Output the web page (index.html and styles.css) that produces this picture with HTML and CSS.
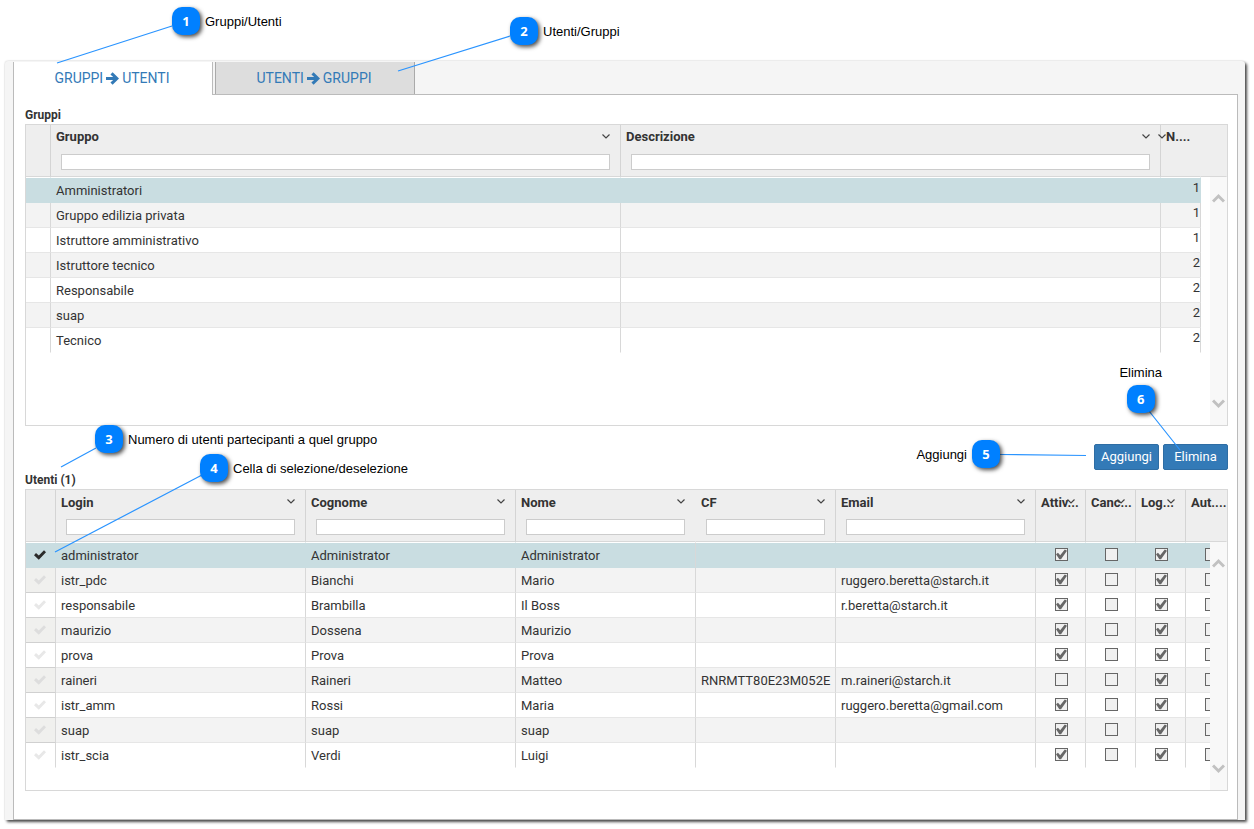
FILE: index.html
```html
<!DOCTYPE html>
<html lang="it">
<head>
    <meta charset="UTF-8">
    <meta name="viewport" content="width=device-width, initial-scale=1.0">
    <title>Gruppi e Utenti</title>
    <link rel="stylesheet" href="styles.css">
</head>
<body>
    <!-- Icons -->
    <svg class="sprite">
        <symbol id="arrow" viewBox="0 0 12 12">
            <path d="M0 4.7h6.6L4.1 2.2 6.1.2 12 6 6.100 11.800 4.100 9.800l2.500-2.500H0z"/>
        </symbol>
        <symbol id="chevron" viewBox="0 0 8 5">
            <path d="M.5 .5 4 4 7.5 .5" fill="none" stroke="currentColor" stroke-width="1.2"/>
        </symbol>
        <symbol id="check" viewBox="0 0 12 10">
            <path d="M10 .3 12 2.300 4.800 9.700 0 5.200 2 3.100 4.800 5.600z"/>
        </symbol>
        <symbol id="scroll" viewBox="0 0 13 10">
            <path d="M1 8.500 6.500 3 12 8.500" fill="none" stroke="currentColor" stroke-width="3"/>
        </symbol>
    </svg>

    <main class="panel">
        <nav class="tabs">
            <a href="#gruppi" class="tab active">GRUPPI <svg class="arrow"><use href="#arrow"/></svg> UTENTI</a>
            <a href="#utenti" class="tab">UTENTI <svg class="arrow"><use href="#arrow"/></svg> GRUPPI</a>
        </nav>

        <div class="content">
            <h2 id="gruppi" class="title">Gruppi</h2>
            <div class="grid">
                <table class="groups" aria-labelledby="gruppi">
                    <colgroup>
                        <col class="w-mark"><col><col class="w-desc"><col class="w-num"><col class="w-end">
                    </colgroup>
                    <thead>
                        <tr>
                            <th></th>
                            <th><span>Gruppo</span><svg class="menu"><use href="#chevron"/></svg><input type="text" aria-label="Filtra Gruppo"></th>
                            <th><span>Descrizione</span><svg class="menu"><use href="#chevron"/></svg><input type="text" aria-label="Filtra Descrizione"></th>
                            <th><span>N....</span><svg class="menu menu-start"><use href="#chevron"/></svg></th>
                            <th></th>
                        </tr>
                    </thead>
                    <tbody id="groupRows"></tbody>
                </table>
                <div class="scrollbar">
                    <svg><use href="#scroll"/></svg>
                    <svg class="down"><use href="#scroll"/></svg>
                </div>
            </div>

            <div class="actions">
                <button type="button" class="btn">Aggiungi</button>
                <button type="button" class="btn">Elimina</button>
            </div>

            <h2 id="utenti" class="title">Utenti (1)</h2>
            <div class="grid">
                <table class="users" aria-labelledby="utenti">
                    <colgroup>
                        <col class="w-check"><col><col class="w-surname"><col class="w-name"><col class="w-cf"><col class="w-email">
                        <col class="w-flag"><col class="w-flag"><col class="w-flag"><col class="w-last">
                    </colgroup>
                    <thead>
                        <tr>
                            <th></th>
                            <th><span>Login</span><svg class="menu"><use href="#chevron"/></svg><input type="text" aria-label="Filtra Login"></th>
                            <th><span>Cognome</span><svg class="menu"><use href="#chevron"/></svg><input type="text" aria-label="Filtra Cognome"></th>
                            <th class="open"><span>Nome</span><svg class="menu"><use href="#chevron"/></svg><input type="text" aria-label="Filtra Nome"></th>
                            <th><span>CF</span><svg class="menu"><use href="#chevron"/></svg><input type="text" aria-label="Filtra CF"></th>
                            <th><span>Email</span><svg class="menu"><use href="#chevron"/></svg><input type="text" aria-label="Filtra Email"></th>
                            <th><span>Attiv...</span><svg class="menu"><use href="#chevron"/></svg></th>
                            <th><span>Canc...</span><svg class="menu"><use href="#chevron"/></svg></th>
                            <th><span>Log...</span><svg class="menu"><use href="#chevron"/></svg></th>
                            <th class="open"><span>Aut....</span></th>
                        </tr>
                    </thead>
                    <tbody id="userRows"></tbody>
                </table>
                <div class="scrollbar">
                    <svg><use href="#scroll"/></svg>
                    <svg class="down"><use href="#scroll"/></svg>
                </div>
            </div>
        </div>
    </main>

    <!-- Callouts -->
    <div class="notes">
        <svg class="lines" viewBox="0 0 520 560">
            <path d="M172 26 57 63M510 36 398 71M96 448 61 467M202 475 55 552"/>
        </svg>
        <div class="note note-1"><b>1</b>Gruppi/Utenti</div>
        <div class="note note-2"><b>2</b>Utenti/Gruppi</div>
        <div class="note note-3"><b>3</b>Numero di utenti partecipanti a quel gruppo</div>
        <div class="note note-4"><b>4</b>Cella di selezione/deselezione</div>
    </div>
    <div class="notes notes-right">
        <svg class="lines" viewBox="0 0 520 560">
            <path d="M266 454.5 352 455.5M415 411 446 450"/>
        </svg>
        <div class="note note-5">Aggiungi<b>5</b></div>
        <div class="note note-6">Elimina<b>6</b></div>
    </div>

    <script>
        const groups = [
            ["Amministratori", 1],
            ["Gruppo edilizia privata", 1],
            ["Istruttore amministrativo", 1],
            ["Istruttore tecnico", 2],
            ["Responsabile", 2],
            ["suap", 2],
            ["Tecnico", 2]
        ];
        // login, cognome, nome, cf, email, attivo
        const users = [
            ["administrator", "Administrator", "Administrator", "", "", true],
            ["istr_pdc", "Bianchi", "Mario", "", "ruggero.beretta@starch.it", true],
            ["responsabile", "Brambilla", "Il Boss", "", "r.beretta@starch.it", true],
            ["maurizio", "Dossena", "Maurizio", "", "", true],
            ["prova", "Prova", "Prova", "", "", true],
            ["raineri", "Raineri", "Matteo", "RNRMTT80E23M052E", "m.raineri@starch.it", false],
            ["istr_amm", "Rossi", "Maria", "", "ruggero.beretta@gmail.com", true],
            ["suap", "suap", "suap", "", "", true],
            ["istr_scia", "Verdi", "Luigi", "", "", true]
        ];

        function flag(name, login, on) {
            return `<td class="flag"><input type="checkbox" aria-label="${name} ${login}" ${on ? "checked" : ""}></td>`;
        }

        document.getElementById("groupRows").innerHTML = groups.map(([name, count], i) => `
            <tr class="${i === 0 ? "selected" : ""}">
                <td></td><td>${name}</td><td></td><td class="num">${count}</td><td class="end"></td>
            </tr>`).join("");

        document.getElementById("userRows").innerHTML = users.map((u, i) => `
            <tr class="${i === 0 ? "selected" : ""}">
                <td class="pick"><button type="button" aria-label="Seleziona ${u[0]}"><svg><use href="#check"/></svg></button></td>
                ${u.slice(0, 5).map(text => `<td>${text}</td>`).join("")}
                ${flag("Attivo", u[0], u[5])}
                ${flag("Cancellato", u[0], false)}
                ${flag("Log", u[0], true)}
                ${flag("Aut", u[0], false)}
            </tr>`).join("");
    </script>
</body>
</html>
```
FILE: styles.css
```css
* {
    box-sizing: border-box;
}
body {
    margin: 0;
    padding: 61px 9px 9px 5px;
    position: relative;
    background: #fff;
    color: #333;
    font-family: Roboto, sans-serif;
    font-size: 13px;
}
.sprite {
    position: absolute;
    width: 0;
    height: 0;
}
.panel {
    min-width: 1200px;
    padding: 1px 7px 0 8px;
    background: #f5f5f5;
    border-radius: 3px 3px 0 0;
    box-shadow: 2px 2px 3px rgba(0, 0, 0, 0.7), 0 0 2px rgba(0, 0, 0, 0.2);
}

/* Tabs */
.tabs {
    display: flex;
    align-items: flex-start;
    gap: 2px;
}
.tab {
    width: 200px;
    height: 32px;
    display: flex;
    align-items: center;
    justify-content: center;
    gap: 3px;
    padding-right: 2px;
    background: #ddd;
    border: 1px solid #aaa;
    border-width: 0 1px;
    color: #337ab7;
    font-size: 14px;
    text-decoration: none;
}
.tab.active {
    height: 33px;
    margin-bottom: -1px;
    padding-bottom: 1px;
    position: relative;
    background: #fff;
    border-color: #bbb;
}
.arrow {
    width: 13px;
    height: 13px;
    fill: #337ab7;
}
.content {
    padding: 10px 9px 28px 11px;
    background: #fff;
    border: 1px solid #bbb;
}
.title {
    margin: 0;
    padding-top: 2px;
    font-size: 12px;
    line-height: 17px;
}

/* Grids */
.grid {
    position: relative;
    height: 302px;
    overflow: hidden;
    border: 1px solid #d8d8d8;
}
table {
    width: 100%;
    table-layout: fixed;
    border-collapse: separate;
    border-spacing: 0;
}
.w-mark { width: 25px; }
.w-desc { width: 540px; }
.w-num { width: 40px; }
.w-end { width: 26px; }
.w-check { width: 30px; }
.w-surname { width: 210px; }
.w-name { width: 180px; }
.w-cf { width: 140px; }
.w-email { width: 200px; }
.w-flag { width: 50px; }
.w-last { width: 41px; }

th {
    position: relative;
    height: 52px;
    padding: 4px 0 0 5px;
    background: #eee;
    border-right: 1px solid #d4d4d4;
    border-bottom: 1px solid #d8d8d8;
    text-align: left;
    vertical-align: top;
    line-height: 16px;
    white-space: nowrap;
}
.users th {
    padding-top: 5px;
}
th:last-child,
th.open,
.groups th:nth-child(4) {
    border-right-color: #eee;
}
th input {
    display: block;
    width: calc(100% - 15px);
    height: 16px;
    margin: 9px 0 0 5px;
    padding: 0 4px;
    background: #fff;
    border: 1px solid #ccc;
    font: inherit;
}
.users th input {
    margin-top: 8px;
}
.menu {
    position: absolute;
    top: 9px;
    right: 10px;
    width: 8px;
    height: 5px;
    color: #444;
}
.menu-start {
    right: auto;
    left: -3px;
}
td {
    height: 25px;
    padding: 2px 0 0 5px;
    border-right: 1px solid #d8d8d8;
    border-bottom: 1px solid #e6e6e6;
    line-height: 16px;
    white-space: nowrap;
}
tbody tr:nth-child(even) td {
    background: #f3f3f3;
}
tbody tr:first-child td {
    height: 26px;
    border-top: 1px solid #fff;
}
tbody tr:last-child td {
    border-bottom-color: #fff;
}
.selected td {
    background: #c9dde1;
    border-right-color: #c9dde1;
    border-bottom-color: #c9dde1;
}
.users .selected td:nth-child(4) {
    border-right-color: #d8d8d8;
}
td.num {
    padding: 0 0 4px;
    text-align: right;
}
tbody tr td.end {
    background: #fff;
    border-color: #fff;
}
td.pick {
    padding: 0;
}
.pick button {
    display: flex;
    align-items: center;
    justify-content: center;
    width: 100%;
    height: 24px;
    padding: 0 2px 0 0;
    background: none;
    border: 0;
}
.pick svg {
    width: 12px;
    height: 10px;
    fill: #e8e8e8;
}
tr:not(.selected):not(:last-child) .pick {
    border-bottom-color: #d0d0d0;
}
tbody tr:nth-child(even) td.pick {
    background: #f0f0ee;
}
tr:nth-child(even) .pick svg {
    fill: #ddd;
}
.selected .pick svg {
    fill: #2a2a2a;
}
td.flag {
    padding: 0 0 0 19px;
}
.flag input {
    appearance: none;
    display: block;
    width: 13px;
    height: 13px;
    margin: 0 0 1px;
    background: #f0f0f0;
    border: 1px solid #666;
}
.flag input:checked::before {
    content: "";
    display: block;
    width: 11px;
    height: 11px;
    background: #666;
    clip-path: polygon(0 48%, 18% 34%, 38% 56%, 80% 4%, 100% 16%, 46% 94%, 30% 94%);
}
.scrollbar {
    position: absolute;
    top: 52px;
    right: 0;
    bottom: 0;
    width: 17px;
    padding: 16px 2px 16px 1px;
    display: flex;
    flex-direction: column;
    align-items: center;
    justify-content: space-between;
    background: #f8f8f8;
}
.scrollbar svg {
    width: 13px;
    height: 10px;
    color: #c1c1c1;
}
.scrollbar .down {
    transform: rotate(180deg);
}

/* Buttons */
.actions {
    display: flex;
    justify-content: flex-end;
    gap: 4px;
    margin-top: 18px;
}
.btn {
    width: 65px;
    height: 26px;
    padding: 0 0 2px;
    background: #337ab7;
    border: 1px solid #2e6da4;
    border-radius: 2px;
    color: #fff;
    font: 13px Roboto, sans-serif;
}

/* Callouts */
.notes {
    position: absolute;
    top: 0;
    left: 0;
    width: 520px;
    height: 560px;
    color: #000;
    font-family: "Liberation Sans", Arial, sans-serif;
    pointer-events: none;
}
.notes-right {
    left: auto;
    right: 0;
}
.lines {
    display: block;
    width: 520px;
    height: 560px;
    fill: none;
    stroke: #2a94ff;
    stroke-width: 1.2;
}
.note {
    position: absolute;
    display: flex;
    align-items: center;
    gap: 5px;
    white-space: nowrap;
}
.note b {
    width: 28px;
    height: 28px;
    background: #0080ff;
    border-radius: 10px;
    box-shadow: 2px 2px 4px rgba(0, 0, 0, 0.7);
    color: #fff;
    font: bold 13px/28px "Noto Sans", sans-serif;
    text-align: center;
}
.note-1 { top: 7px; left: 172px; }
.note-2 { top: 17px; left: 510px; }
.note-3 { top: 425px; left: 95px; }
.note-4 { top: 454px; left: 200px; }
.note-5 { top: 440px; right: 254px; }
.note-6 {
    top: 365px;
    right: 92px;
    flex-direction: column;
}
```
